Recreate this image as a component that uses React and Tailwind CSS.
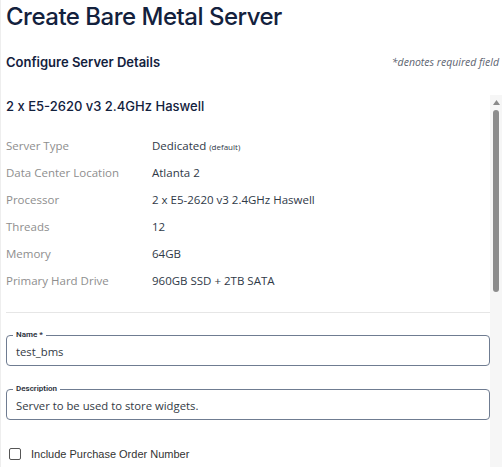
import React from "react";

const rows = [
  ["Server Type", "Dedicated", true],
  ["Data Center Location", "Atlanta 2"],
  ["Processor", "2 x E5-2620 v3 2.4GHz Haswell"],
  ["Threads", "12"],
  ["Memory", "64GB"],
  ["Primary Hard Drive", "960GB SSD + 2TB SATA"],
];

function Field({ label, value }) {
  return (
    <fieldset className="border border-[#6f7c91] rounded-[4px] pl-[9px] pr-2 pt-[4px] pb-[5px]">
      <legend className="ml-[-3px] px-[3px] text-[8px] leading-[10px] text-[#2a2f3a] font-semibold" style={{ fontFamily: "Roboto, 'Open Sans', sans-serif" }}>
        {label}
      </legend>
      <div className="text-[11.3px] leading-[16px] text-[#333a45]" style={{ fontFamily: "'Open Sans', sans-serif" }}>
        {value}
      </div>
    </fieldset>
  );
}

export default function App() {
  return (
    <div className="h-[467px] w-[502px] overflow-hidden bg-white flex flex-col border-l border-[#eeeeee]">
      <h1 className="pl-[5px] text-[24px] leading-[34px] font-medium text-[#13213d] tracking-[-0.5px]" style={{ fontFamily: "Inter, sans-serif" }}>
        Create Bare Metal Server
      </h1>
      <div className="mt-[19px] flex items-center justify-between pl-[5px] pr-[3px] h-[20px]">
        <span className="text-[13px] font-semibold text-[#13213d]" style={{ fontFamily: "Inter, sans-serif" }}>
          Configure Server Details
        </span>
        <span className="text-[10.5px] italic text-[#5d6470]" style={{ fontFamily: "'Open Sans', sans-serif" }}>
          *denotes required field
        </span>
      </div>
      <div className="mt-[22px] flex flex-1 min-h-0">
        <div className="flex-1 pl-[5px] pt-[2px]">
          <div className="h-[20px] flex items-center text-[13px] font-medium text-[#13213d]" style={{ fontFamily: "Inter, sans-serif" }}>
            2 x E5-2620 v3 2.4GHz Haswell
          </div>
          <div className="mt-[15px]" style={{ fontFamily: "'Open Sans', sans-serif" }}>
            {rows.map(([k, v, d]) => (
              <div key={k} className="h-[27px] flex items-center text-[11.5px]">
                <span className="w-[146px] text-[#8e8e8e]">{k}</span>
                <span className="text-[#2f3947]">
                  {v}
                  {d && <span className="text-[8px] ml-[3px]">(default)</span>}
                </span>
              </div>
            ))}
          </div>
          <div className="mt-[18px] border-t border-[#e6e6e6]" />
          <div className="mt-[17px] flex flex-col gap-[18px]">
            <Field label="Name *" value="test_bms" />
            <Field label="Description" value="Server to be used to store widgets." />
          </div>
          <label className="mt-[26px] ml-[3px] flex items-center gap-[10px] text-[11px] text-[#333]" style={{ fontFamily: "'Liberation Sans', Arial, sans-serif" }}>
            <span className="w-[12px] h-[12px] border border-[#555] rounded-[2px]" />
            Include Purchase Order Number
          </label>
        </div>
        <div className="w-[12px] bg-[#f6f6f6] flex flex-col items-center pt-[5px]">
          <svg width="7" height="5" viewBox="0 0 7 5">
            <path d="M3.5 0 L7 5 L0 5 Z" fill="#8a8a8a" />
          </svg>
          <div className="mt-[5px] w-[6px] h-[182px] rounded-full bg-[#8c8c8c]" />
        </div>
      </div>
    </div>
  );
}
